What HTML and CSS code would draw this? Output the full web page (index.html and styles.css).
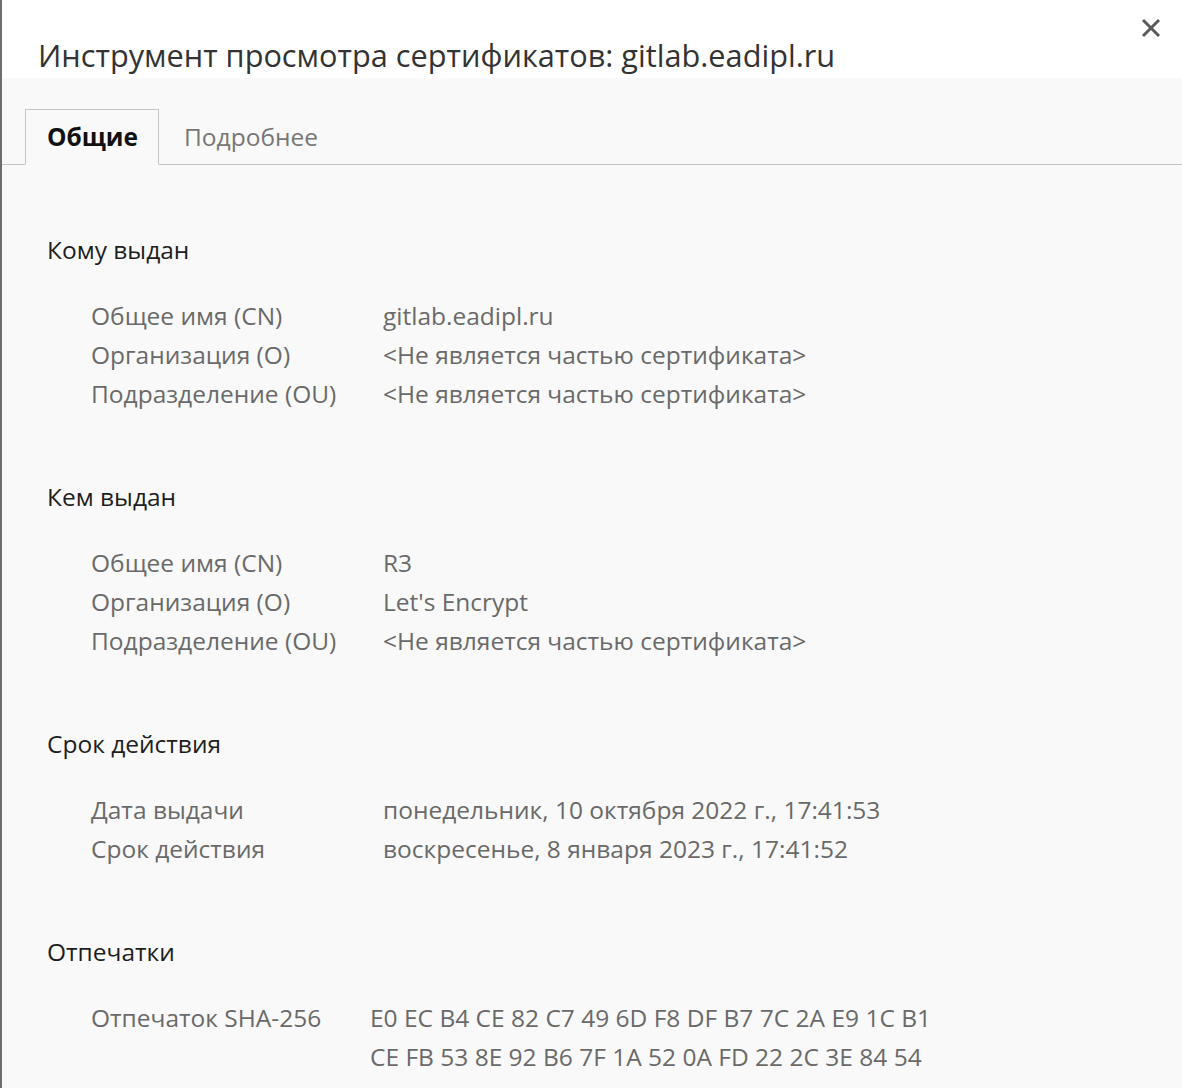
FILE: index.html
```html
<!DOCTYPE html>
<html lang="ru">
<head>
<meta charset="utf-8">
<title>Инструмент просмотра сертификатов</title>
<link rel="stylesheet" href="styles.css">
</head>
<body>
<div class="window">
  <header class="header">
    <h1 class="title">Инструмент просмотра сертификатов: gitlab.eadipl.ru</h1>
    <button class="close" aria-label="Закрыть">
      <svg width="20" height="20" viewBox="0 0 20 20"><path d="M2 2 L18 18 M18 2 L2 18" stroke="#5a5a5a" stroke-width="3" stroke-linecap="butt" fill="none"/></svg>
    </button>
  </header>
  <nav class="tabs">
    <div class="tab-spacer"></div>
    <div class="tab active">Общие</div>
    <div class="tab">Подробнее</div>
    <div class="tab-fill"></div>
  </nav>
  <main class="content">
    <section class="section">
      <h2 class="section-head">Кому выдан</h2>
      <div class="rows">
        <div class="label">Общее имя (CN)</div><div class="value">gitlab.eadipl.ru</div>
        <div class="label">Организация (O)</div><div class="value">&lt;Не является частью сертификата&gt;</div>
        <div class="label">Подразделение (OU)</div><div class="value">&lt;Не является частью сертификата&gt;</div>
      </div>
    </section>
    <section class="section">
      <h2 class="section-head">Кем выдан</h2>
      <div class="rows">
        <div class="label">Общее имя (CN)</div><div class="value">R3</div>
        <div class="label">Организация (O)</div><div class="value">Let's Encrypt</div>
        <div class="label">Подразделение (OU)</div><div class="value">&lt;Не является частью сертификата&gt;</div>
      </div>
    </section>
    <section class="section">
      <h2 class="section-head">Срок действия</h2>
      <div class="rows">
        <div class="label">Дата выдачи</div><div class="value">понедельник, 10 октября 2022 г., 17:41:53</div>
        <div class="label">Срок действия</div><div class="value">воскресенье, 8 января 2023 г., 17:41:52</div>
      </div>
    </section>
    <section class="section">
      <h2 class="section-head">Отпечатки</h2>
      <div class="rows rows-narrow">
        <div class="label">Отпечаток SHA-256</div><div class="value">E0 EC B4 CE 82 C7 49 6D F8 DF B7 7C 2A E9 1C B1<br>CE FB 53 8E 92 B6 7F 1A 52 0A FD 22 2C 3E 84 54</div>
      </div>
    </section>
  </main>
</div>
</body>
</html>
```

FILE: styles.css
```css
html, body {
  margin: 0;
  padding: 0;
  height: 100%;
  overflow: hidden;
}
body {
  background: #f9f9f9;
  font-family: "Open Sans", "Noto Sans", sans-serif;
  -webkit-font-smoothing: antialiased;
}
.window {
  height: 100%;
  border-left: 2px solid #6e6e6e;
  background: #f9f9f9;
  box-sizing: border-box;
}
.header {
  position: relative;
  background: #ffffff;
  height: 78px;
  box-sizing: border-box;
  padding: 35px 0 0 36px;
}
.title {
  margin: 0;
  font-weight: 400;
  font-size: 30.7px;
  line-height: 40px;
  color: #333333;
  letter-spacing: 0;
  white-space: nowrap;
}
.close {
  position: absolute;
  top: 18px;
  right: 21px;
  width: 20px;
  height: 20px;
  padding: 0;
  border: 0;
  background: none;
  display: block;
}
.close svg { display: block; }
.tabs {
  display: flex;
  align-items: flex-end;
  padding-top: 31px;
}
.tab-spacer {
  width: 23px;
  align-self: stretch;
  border-bottom: 1px solid #c4c4c4;
}
.tab {
  font-size: 24.5px;
  line-height: 54px;
  height: 54px;
  padding: 0 25px;
  color: #777777;
  border-bottom: 1px solid #c4c4c4;
}
.tab.active {
  font-weight: 700;
  color: #111111;
  padding: 0 20px 0 21px;
  border: 1px solid #c4c4c4;
  border-bottom: 1px solid #f9f9f9;
}
.tab-fill {
  flex: 1;
  align-self: stretch;
  border-bottom: 1px solid #c4c4c4;
}
.content {
  padding: 1px 0 0 45px;
}
.section {
  margin-top: 64px;
}
.section-head {
  margin: 0 0 27px 0;
  font-size: 24.5px;
  font-weight: 400;
  line-height: 39px;
  color: #1e1e1e;
}
.rows {
  display: grid;
  grid-template-columns: 292px auto;
  justify-content: start;
  padding-left: 44px;
  font-size: 24.5px;
  line-height: 39px;
  color: #6a6a6a;
}
.rows-narrow {
  grid-template-columns: 279px auto;
}
.label, .value {
  white-space: nowrap;
}
```
